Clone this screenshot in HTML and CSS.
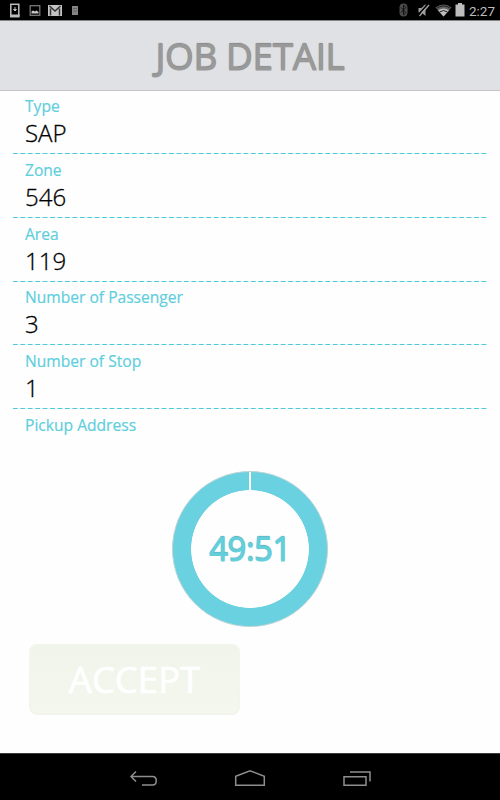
FILE: index.html
```html
<!DOCTYPE html>
<html lang="en">
<head>
    <meta charset="UTF-8" />
    <meta name="viewport" content="width=device-width, initial-scale=1.0" />
    <title>Job Detail</title>
    <link rel="stylesheet" href="styles.css">
</head>
<body>
    <div class="status-bar">
        <svg class="status-left" width="90" height="20" viewBox="0 0 90 20">
            <rect x="10.8" y="4.3" width="8" height="12.4" fill="none" stroke="#bdbdbd" stroke-width="1.5" />
            <path d="M10 15.5h9.6" stroke="#bdbdbd" stroke-width="2" />
            <path d="M15 7v4M13.500 9.500h3L15 11z" fill="#bdbdbd" stroke="#bdbdbd" />
            <rect x="30.2" y="5.7" width="9.6" height="9.6" fill="none" stroke="#808080" stroke-width="1.2" />
            <path d="M31.5 13.5v-2l1.500-1 2 1 1.500-1 2 1.500v1.500z" fill="#c8c8c8" />
            <rect x="48" y="5" width="14" height="11" fill="#c4c4c4" />
            <path d="M49.5 6l5.5 5 5.5-5M50.5 8.5v7M59.5 8.5v7" fill="none" stroke="#333" stroke-width="1.5" />
            <rect x="72" y="6" width="6" height="9" fill="#858585" />
            <path d="M73 8.5h4M73 11h4" stroke="#606060" />
        </svg>
        <div class="status-right">
            <svg width="68" height="20" viewBox="0 0 68 20">
                <rect x="1.5" y="3.5" width="8" height="13" rx="4" fill="#4c4c4c" />
                <path d="M3 7.5l5 5-2.5 2.5V5L8 7.5l-5 5" fill="none" stroke="#111" />
                <path d="M20.500 8h3l4-4v12l-4-3.500h-3z" fill="#9a9a9a" />
                <path d="M20.500 14.500L30 4" stroke="#000" stroke-width="1.500" />
                <path d="M21.500 16L31 5" stroke="#a5a5a5" stroke-width="1.200" />
                <path d="M45.500 16.500L37.500 7.500Q45.500 1.500 53.500 7.500z" fill="#606060" />
                <path d="M45.500 16.500l-5.500-6Q45.500 6.500 51 10.500z" fill="#bdbdbd" />
                <path d="M38.500 8.300Q45.500 3.500 52.500 8.300M41.500 12Q45.500 9 49.500 12" fill="none" stroke="#202020" />
                <path d="M57.500 4.500h2.500V3h4v1.500h2.500v12h-9z" fill="#bdbdbd" />
            </svg>
            <span class="clock">2:27</span>
        </div>
    </div>

    <div class="header">
        <h1>JOB DETAIL</h1>
    </div>

    <div class="content">
        <div class="details">
            <div class="field">
                <p class="label">Type</p>
                <p class="value">SAP</p>
            </div>
            <div class="field">
                <p class="label">Zone</p>
                <p class="value">546</p>
            </div>
            <div class="field">
                <p class="label">Area</p>
                <p class="value">119</p>
            </div>
            <div class="field">
                <p class="label">Number of Passenger</p>
                <p class="value">3</p>
            </div>
            <div class="field">
                <p class="label">Number of Stop</p>
                <p class="value">1</p>
            </div>
            <div class="field last">
                <p class="label">Pickup Address</p>
            </div>
        </div>

        <div class="timer">
            <span class="time">49:51</span>
        </div>

        <button class="acceptBtn">ACCEPT</button>
    </div>

    <div class="nav-bar">
        <svg width="280" height="46" viewBox="0 0 280 46">
            <g fill="none" stroke="#8e8e8e" stroke-width="1.500">
                <path d="M26 17.500l-5 5 5 5M21 22.500h21.500c5 0 5 8.500 0 8.500H32" />
                <path d="M125.700 31.200v-9l14.300-5.400 14.300 5.400v9z" />
                <path d="M234 22.700h22v8.500h-22zM240 18h20v9.500" />
            </g>
        </svg>
    </div>
</body>
</html>
```

FILE: styles.css
```css
* {
    margin: 0;
    padding: 0;
    box-sizing: border-box;
    font-family: 'Open Sans', sans-serif;
}

body {
    background-color: #fefefe;
    display: flex;
    flex-direction: column;
    height: 100vh;
    overflow: hidden;
}

.status-bar {
    background-color: black;
    display: flex;
    justify-content: space-between;
    height: 20px;
    flex-shrink: 0;
}

.status-right {
    display: flex;
    padding-right: 5px;
}

.clock {
    font-family: 'Roboto', sans-serif;
    font-size: 13.5px;
    line-height: 22px;
    color: #bdbdbd;
    margin-left: 3px;
}

.header {
    background-color: #e0e1e5;
    border-top: 1px solid #85858a;
    border-bottom: 1px solid #c4c4c4;
    height: 71px;
    flex-shrink: 0;
    text-align: center;
}

h1 {
    font-size: 37px;
    font-weight: 400;
    line-height: 69px;
    letter-spacing: -0.4px;
    color: #999;
    -webkit-text-stroke: 0.9px #999;
    text-shadow: 0 -1px 1px #777;
}

.content {
    flex: 1;
    padding: 0 13px;
}

.field {
    height: 63.8px;
    padding: 4px 12px 0;
    background: linear-gradient(90deg, #4cc8d8 5px, #e2f6f8 5px) 0 62px / 7.45px 1px repeat-x;
}

.last {
    background: none;
    height: 61px;
}

.label {
    font-size: 15.6px;
    line-height: 22px;
    color: #5fcfdc;
    -webkit-text-stroke: 0.2px #5fcfdc;
}

.value {
    font-size: 24px;
    font-weight: 300;
    line-height: 31px;
    color: black;
    -webkit-text-stroke: 0.3px black;
}

.timer {
    width: 156px;
    height: 156px;
    margin: 0 auto;
    border-radius: 50%;
    display: flex;
    justify-content: center;
    align-items: center;
    border: 1px solid #c0d4d7;
    background:
        radial-gradient(circle, #fefefe 58.5px, transparent 59.2px),
        linear-gradient(white, white) 50.3% 0 / 2px 20px no-repeat,
        #69d1df;
}

.time {
    font-size: 33px;
    font-weight: 400;
    letter-spacing: -0.5px;
    color: #65cedb;
    -webkit-text-stroke: 1px #65cedb;
    text-shadow: 0 -1px 1px #4998a1;
}

.acceptBtn {
    display: block;
    width: 211px;
    height: 71px;
    margin: 17px 0 0 16px;
    border: 2px solid #f1f5ec;
    border-radius: 8px;
    background: linear-gradient(#f1f4eb, #f4f7ee);
    color: white;
    font-size: 36.5px;
    font-weight: 400;
    -webkit-text-stroke: 0.7px white;
}

.nav-bar {
    background-color: black;
    border-top: 1px solid #3a3a3a;
    height: 47px;
    flex-shrink: 0;
    display: flex;
    justify-content: center;
}
```
